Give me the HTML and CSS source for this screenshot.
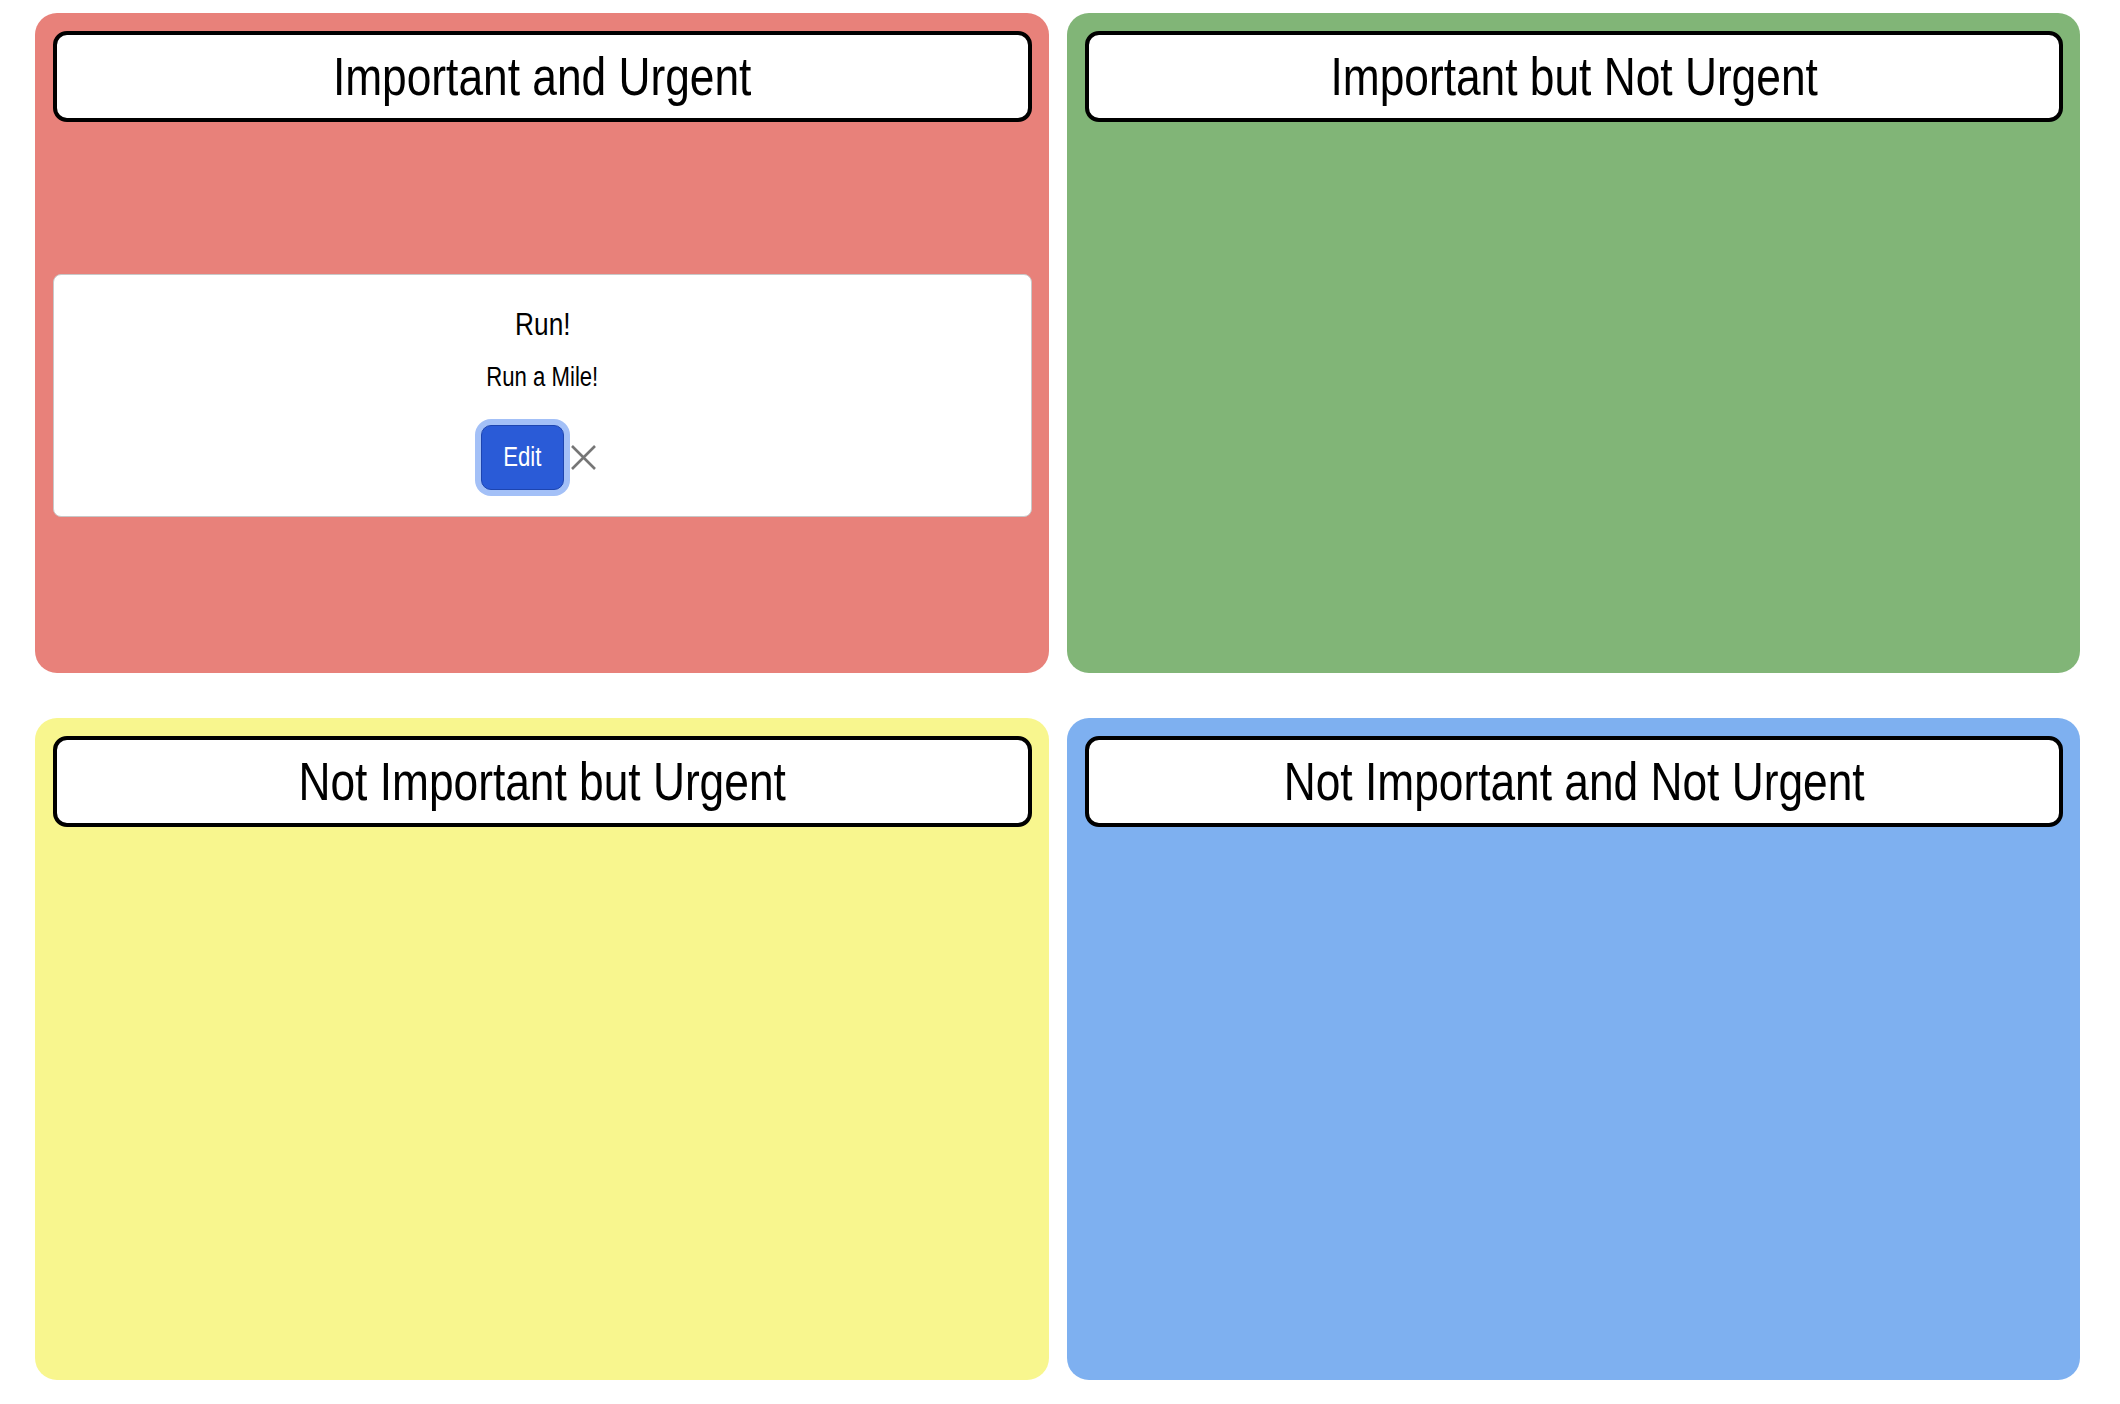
FILE: index.html
```html
<!DOCTYPE html>
<html lang="en">
<head>
<meta charset="utf-8">
<title>Eisenhower Matrix</title>
<link rel="stylesheet" href="styles.css">
</head>
<body>
<main class="matrix">
  <section class="quadrant q-red">
    <h1 class="q-title"><span class="narrow">Important and Urgent</span></h1>
    <div class="q-body">
      <div class="task">
        <h3 class="task-title"><span class="narrow">Run!</span></h3>
        <p class="task-desc"><span class="narrow">Run a Mile!</span></p>
        <div class="task-actions">
          <button class="btn-edit"><span class="narrow">Edit</span></button>
          <button class="btn-delete" aria-label="Delete">
            <svg width="27" height="27" viewBox="0 0 27 27"><path d="M2 2 L25 25 M25 2 L2 25" stroke="#767676" stroke-width="2.6" fill="none"/></svg>
          </button>
        </div>
      </div>
    </div>
  </section>
  <section class="quadrant q-green">
    <h1 class="q-title"><span class="narrow">Important but Not Urgent</span></h1>
    <div class="q-body"></div>
  </section>
  <section class="quadrant q-yellow">
    <h1 class="q-title"><span class="narrow">Not Important but Urgent</span></h1>
    <div class="q-body"></div>
  </section>
  <section class="quadrant q-blue">
    <h1 class="q-title"><span class="narrow">Not Important and Not Urgent</span></h1>
    <div class="q-body"></div>
  </section>
</main>
</body>
</html>
```
FILE: styles.css
```css
html, body {
  margin: 0;
  padding: 0;
  background: #ffffff;
}
body {
  font-family: "Liberation Sans", Arial, sans-serif;
  color: #000;
}
.narrow {
  display: inline-block;
  transform: scaleX(0.82);
  transform-origin: center;
  white-space: nowrap;
}
.matrix {
  display: grid;
  grid-template-columns: 1014px 1013px;
  grid-template-rows: 660px 662px;
  column-gap: 18px;
  row-gap: 45px;
  padding: 13px 40px 24px 35px;
}
.quadrant {
  border-radius: 22px;
  display: flex;
  flex-direction: column;
  padding: 18px 17px 18px 18px;
  box-sizing: border-box;
}
.q-red { background: #e8817a; }
.q-green { background: #81b577; }
.q-yellow { background: #f8f68e; }
.q-blue { background: #7eb0f0; }
.q-title {
  margin: 0;
  height: 91px;
  box-sizing: border-box;
  border: 4px solid #000;
  border-radius: 14px;
  background: #fff;
  font-size: 54px;
  font-weight: normal;
  line-height: 83px;
  text-align: center;
}
.q-body {
  flex: 1;
  display: flex;
  flex-direction: column;
  justify-content: center;
  padding-top: 14px;
}
.task {
  background: #fff;
  border: 1px solid #c8c8c8;
  border-radius: 8px;
  height: 243px;
  box-sizing: border-box;
  padding-top: 31px;
  text-align: center;
}
.task-title {
  margin: 0;
  font-size: 32px;
  font-weight: normal;
}
.task-desc {
  margin: 19px 0 0;
  font-size: 27px;
}
.task-actions {
  margin-top: 32px;
  display: flex;
  justify-content: center;
  align-items: center;
}
.btn-edit {
  font-family: inherit;
  font-size: 27px;
  color: #fff;
  background: #2a5bd7;
  border: 1px solid #1d45b0;
  border-radius: 10px;
  width: 83px;
  height: 65px;
  padding: 0;
  box-shadow: 0 0 0 6px #a3c0f7;
}
.btn-delete {
  background: none;
  border: none;
  padding: 0 7px 0 6px;
  display: flex;
  align-items: center;
}
```
